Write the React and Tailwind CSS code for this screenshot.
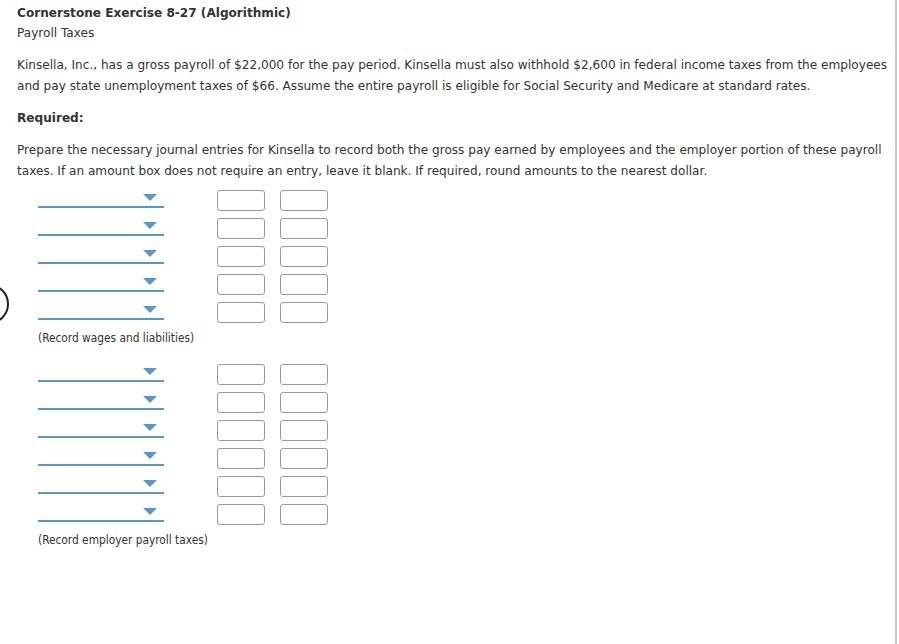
import React from 'react';

const FONT = { fontFamily: '"DejaVu Sans", Verdana, sans-serif' };

function Row() {
  return (
    <div className="flex h-[21px] items-start">
      <div className="relative ml-[38px] h-[18px] w-[126px] border-b-2 border-[#5b96c9]">
        <span className="absolute right-[7px] top-[4px] h-0 w-0 border-x-[7px] border-t-[7px] border-x-transparent border-t-[#5b96c9]" />
      </div>
      <div className="ml-[53px] h-[21px] w-[48px] rounded-[3px] border border-[#9a9a9a] bg-white" />
      <div className="ml-[15px] h-[21px] w-[48px] rounded-[3px] border border-[#9a9a9a] bg-white" />
    </div>
  );
}

function Entry({ rows, label }) {
  return (
    <div>
      <div className="flex flex-col gap-[7px]">
        {Array.from({ length: rows }).map((_, i) => (
          <Row key={i} />
        ))}
      </div>
      <p
        className="ml-[38px] mt-[7px] text-[11.8px] leading-[16px] text-[#333]"
        style={{ fontFamily: '"DejaVu Sans Condensed", Tahoma, sans-serif' }}
      >
        {label}
      </p>
    </div>
  );
}

export default function App() {
  return (
    <div className="relative h-[644px] w-[899px] overflow-hidden bg-white" style={FONT}>
      <div className="h-[644px] w-[897px] border-r-2 border-[#cacaca] pl-[17px] pt-[4px] text-[#333]">
        <h1 className="text-[12.1px] font-bold leading-[18px]">Cornerstone Exercise 8-27 (Algorithmic)</h1>
        <p className="mt-[1px] text-[12.1px] leading-[20px]">Payroll Taxes</p>

        <p className="mt-[12px] pr-[4px] text-[12.1px] leading-[21px]">
          Kinsella, Inc., has a gross payroll of $22,000 for the pay period. Kinsella must also withhold $2,600 in
          federal income taxes from the employees and pay state unemployment taxes of $66. Assume the entire payroll
          is eligible for Social Security and Medicare at standard rates.
        </p>

        <p className="mt-[11px] text-[12.1px] font-bold leading-[20px]">Required:</p>

        <p className="mt-[12px] pr-[4px] text-[12.1px] leading-[21px]">
          Prepare the necessary journal entries for Kinsella to record both the gross pay earned by employees and the
          employer portion of these payroll taxes. If an amount box does not require an entry, leave it blank. If
          required, round amounts to the nearest dollar.
        </p>
      </div>

      <svg className="absolute left-0 top-[284px]" width="12" height="42" viewBox="0 0 12 42">
        <circle cx="-11" cy="20" r="19" fill="none" stroke="#222" strokeWidth="2" />
      </svg>

      <div className="absolute left-0 top-[190px]">
        <Entry rows={5} label="(Record wages and liabilities)" />
        <div className="mt-[18px]">
          <Entry rows={6} label="(Record employer payroll taxes)" />
        </div>
      </div>
    </div>
  );
}
